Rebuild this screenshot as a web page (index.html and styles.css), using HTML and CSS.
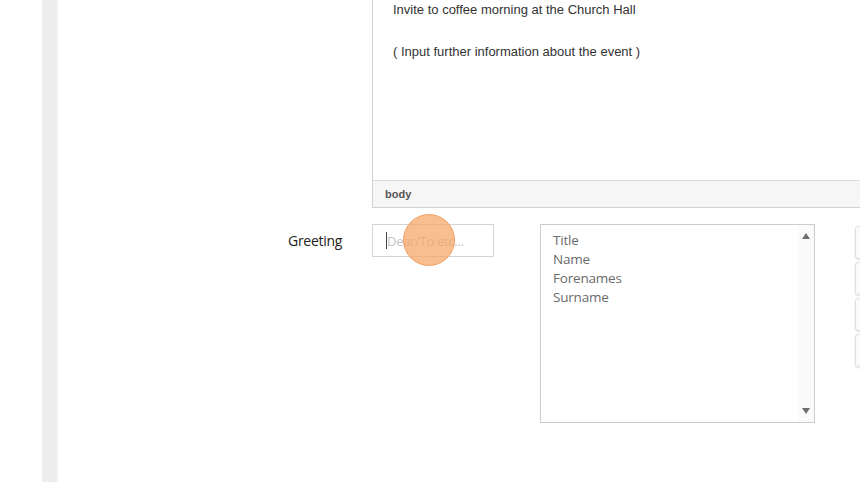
FILE: index.html
```html
<!DOCTYPE html>
<html>
<head>
<meta charset="utf-8">
<link rel="stylesheet" href="styles.css">
</head>
<body>
<div class="page">
  <div class="rail"></div>
  <div class="strip"></div>
  <div class="main">
    <div class="row editor-row">
      <div class="label"></div>
      <div class="editor">
        <div class="editor-body">
          <p>Invite to coffee morning at the Church Hall</p>
          <p>( Input further information about the event )</p>
        </div>
        <div class="statusbar">body</div>
      </div>
    </div>
    <div class="row greeting-row">
      <div class="label">Greeting</div>
      <div class="fields">
        <div class="input-wrap">
          <div class="input"><span class="caret"></span><span class="placeholder">Dear/To etc...</span></div>
          <div class="click-marker"></div>
        </div>
        <div class="listbox">
          <ul class="options">
            <li>Title</li>
            <li>Name</li>
            <li>Forenames</li>
            <li>Surname</li>
          </ul>
          <div class="scrollbar">
            <span class="arrow up"></span>
            <span class="arrow down"></span>
          </div>
        </div>
        <div class="buttons">
          <div class="btn"></div>
          <div class="btn"></div>
          <div class="btn"></div>
          <div class="btn"></div>
        </div>
      </div>
    </div>
  </div>
</div>
</body>
</html>
```

FILE: styles.css
```css
html, body {
  margin: 0;
  padding: 0;
  background: #ffffff;
  height: 482px;
  overflow: hidden;
}
.page {
  display: flex;
  height: 482px;
}
.rail {
  width: 42px;
  flex: none;
  background: #ffffff;
}
.strip {
  width: 15px;
  flex: none;
  background: #eeeded;
  box-shadow: 1px 0 2px rgba(0,0,0,0.04);
}
.main {
  flex: 1;
  overflow: hidden;
  font-family: "Open Sans", sans-serif;
}
.row {
  display: grid;
  grid-template-columns: 285px auto;
  column-gap: 30px;
}
.label {
  text-align: right;
  font-size: 14px;
  color: #222222;
  letter-spacing: -0.3px;
}
.editor {
  width: 520px;
  border: 1px solid #d1d1d1;
  border-top: none;
  display: flex;
  flex-direction: column;
  box-sizing: border-box;
  height: 208px;
}
.editor-body {
  flex: 1;
  padding: 0 0 0 20px;
  font-family: "Liberation Sans", Arial, sans-serif;
  font-size: 13px;
  color: #333333;
}
.editor-body p {
  margin: 2px 0 27px 0;
  line-height: 15px;
}
.statusbar {
  height: 26px;
  border-top: 1px solid #dddddd;
  background: #f6f6f6;
  font-family: "Liberation Sans", Arial, sans-serif;
  font-weight: bold;
  font-size: 11px;
  color: #555555;
  line-height: 26px;
  padding-left: 12px;
}
.greeting-row {
  margin-top: 16px;
}
.greeting-row .label {
  line-height: 33px;
}
.fields {
  display: flex;
  align-items: flex-start;
}
.input-wrap {
  position: relative;
  width: 122px;
  height: 33px;
  flex: none;
}
.input {
  box-sizing: border-box;
  width: 122px;
  height: 33px;
  border: 1px solid #d4d4d4;
  display: flex;
  align-items: center;
  padding-left: 13px;
  font-size: 13px;
  letter-spacing: -0.3px;
}
.caret {
  width: 1px;
  height: 17px;
  background: #444444;
}
.placeholder {
  color: #c4c4c4;
}
.click-marker {
  position: absolute;
  left: 31px;
  top: -10px;
  width: 50px;
  height: 50px;
  border-radius: 50%;
  background: rgba(247, 165, 100, 0.72);
  border: 1.5px solid #f3a163;
}
.listbox {
  margin-left: 46px;
  width: 275px;
  height: 199px;
  box-sizing: border-box;
  border: 1px solid #cccccc;
  display: flex;
  flex: none;
}
.options {
  list-style: none;
  margin: 0;
  padding: 6px 0 0 12px;
  flex: 1;
  font-size: 13.5px;
  line-height: 19px;
  color: #6a6a6a;
  letter-spacing: -0.2px;
}
.scrollbar {
  width: 16px;
  background: #fafafa;
  display: flex;
  flex-direction: column;
  justify-content: space-between;
  align-items: center;
  padding: 8px 0 8px;
}
.arrow {
  width: 0;
  height: 0;
  border-left: 4.5px solid transparent;
  border-right: 4.5px solid transparent;
}
.arrow.up {
  border-bottom: 6px solid #6e6e6e;
}
.arrow.down {
  border-top: 6px solid #6e6e6e;
}
.buttons {
  margin-left: 40px;
  padding-top: 2px;
  display: flex;
  flex-direction: column;
  gap: 3px;
}
.btn {
  width: 40px;
  height: 33px;
  box-sizing: border-box;
  border: 1px solid #e0e0e0;
  border-radius: 3px;
  background: #fafafa;
  box-shadow: 0 1px 2px rgba(0,0,0,0.12);
}
```
